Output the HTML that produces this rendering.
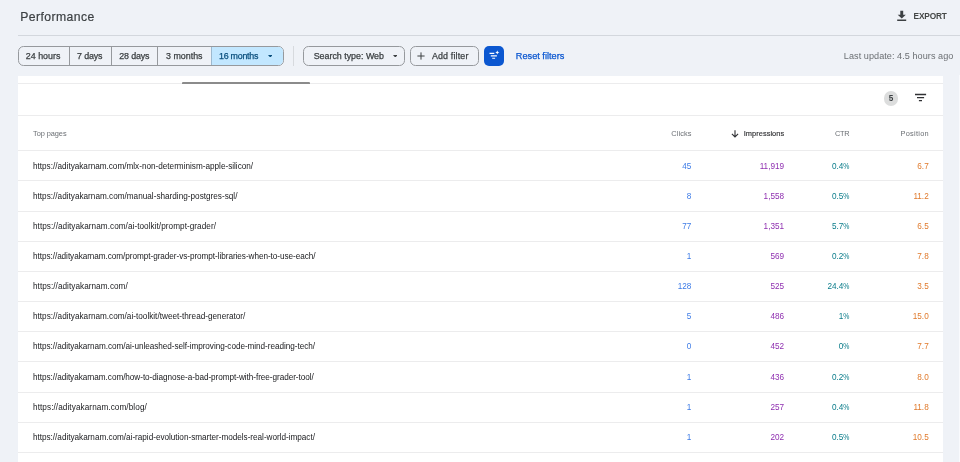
<!DOCTYPE html>
<html lang="en">
<head>
<meta charset="utf-8">
<title>Performance</title>
<style>
*{box-sizing:border-box;margin:0;padding:0}
html,body{width:960px;height:462px;overflow:hidden;background:#eff2f7;font-family:"Liberation Sans",Arial,sans-serif;color:#1f1f1f}
.a{position:absolute;white-space:nowrap}
.seg{position:absolute;top:45.8px;height:20px;border:1px solid #96999d;font-size:8.9px;line-height:18px;color:#3c4043;white-space:nowrap;-webkit-text-stroke:0.25px currentColor}
.seg span{position:absolute;top:0}
.ln{position:absolute;left:17.8px;width:925.7px;height:1px;background:#ececed}
.t{position:absolute;white-space:nowrap;font-size:8.2px;line-height:10px}
.url{color:#202124}
.r{text-align:right}
.c1{color:#3d7be6}
.c2{color:#8f2fb0}
.c3{color:#0a7c8a}
.c4{color:#e07a2c}
.h{color:#6b6f74;font-size:7.4px}
</style>
</head>
<body><div id="root" style="position:absolute;left:0;top:0;width:960px;height:462px;will-change:transform">
<div class="a" id="title" style="left:20.3px;top:7.85px;font-size:12.2px;line-height:18px;color:#3c4043;-webkit-text-stroke:0.2px #3c4043;letter-spacing:0.420px">Performance</div>
<svg class="a" style="left:896px;top:9.5px" width="12" height="13" viewBox="0 0 12 13"><path d="M1.2 9.6h9v1.5h-9zM4.3 0.8h2.9v3.9h2.6L5.75 8.6 1.7 4.7h2.6z" fill="#3c4043"/></svg>
<div class="a" id="export" style="left:913.6px;top:10.9px;font-size:8.3px;line-height:10px;font-weight:bold;color:#444746;letter-spacing:-0.160px">EXPORT</div>
<div class="a" style="left:17.8px;right:0;top:34.8px;height:1px;background:#d3d7dd"></div>
<div class="a" style="left:17.8px;top:45.8px;width:266.3px;height:20px;border:1px solid #96999d;border-radius:5.5px;overflow:hidden"><div class="a" style="left:192.2px;top:-1px;width:80px;height:20px;background:#c2e7ff;border:1px solid #86a9c4;border-right:0;border-left-color:#9db9cf"></div></div>
<div class="a" style="left:69.0px;top:46.5px;width:1px;height:18.6px;background:#96999d"></div>
<div class="a" style="left:110.8px;top:46.5px;width:1px;height:18.6px;background:#96999d"></div>
<div class="a" style="left:157.0px;top:46.5px;width:1px;height:18.6px;background:#96999d"></div>
<div class="seg" style="border:0;left:25.8px;top:46.8px;height:18px;"><span id="s1" style="left:0;letter-spacing:0.000px">24 hours</span></div>
<div class="seg" style="border:0;left:77.0px;top:46.8px;height:18px;"><span id="s2" style="left:0;letter-spacing:-0.120px">7 days</span></div>
<div class="seg" style="border:0;left:119.3px;top:46.8px;height:18px;"><span id="s3" style="left:0;letter-spacing:-0.150px">28 days</span></div>
<div class="seg" style="border:0;left:166.0px;top:46.8px;height:18px;"><span id="s4" style="left:0;letter-spacing:0.000px">3 months</span></div>
<div class="seg" style="border:0;left:219.0px;top:46.8px;height:18px;color:#0a4f7d"><span id="s5" style="left:0;letter-spacing:-0.250px">16 months</span></div>
<svg class="a" style="left:267.9px;top:54.7px" width="4.6" height="2.8" viewBox="0 0 5 3"><path d="M0 0h5L2.5 2.8z" fill="#0a4f7d"/></svg>
<div class="a" style="left:293.3px;top:46px;width:1px;height:19.5px;background:#d7dade"></div>
<div class="seg" style="left:303.3px;width:101.8px;border-radius:5.5px"><span id="s6" style="left:9.4px;letter-spacing:-0.007px">Search type: Web</span></div>
<svg class="a" style="left:392.9px;top:54.7px" width="4.6" height="2.8" viewBox="0 0 5 3"><path d="M0 0h5L2.5 2.8z" fill="#3c4043"/></svg>
<div class="seg" style="left:410.3px;width:69.1px;border-radius:5.5px"><span id="s7" style="left:20.6px;letter-spacing:0.167px">Add filter</span></div>
<svg class="a" style="left:416.8px;top:51.8px" width="8" height="8" viewBox="0 0 8 8"><path d="M4 0.4v7.2M0.4 4h7.2" stroke="#3c4043" stroke-width="1" fill="none"/></svg>
<div class="a" style="left:483.9px;top:45.8px;width:20.2px;height:19.9px;border-radius:5px;background:#0b57d0"></div>
<svg class="a" style="left:484px;top:46px" width="20" height="20" viewBox="0 0 20 20"><path d="M5.5 7.3h4.8M6.8 9.8h6.1M8.2 12.2h2.9" stroke="#fff" stroke-width="1.15" fill="none"/><path d="M13.3 4.2c.25 1.4.8 1.95 2.2 2.2-1.4.25-1.95.8-2.2 2.2-.25-1.4-.8-1.95-2.2-2.2 1.4-.25 1.95-.8 2.2-2.2z" fill="#fff"/></svg>
<div class="a" id="reset" style="left:515.8px;top:50.6px;font-size:9.2px;line-height:10px;color:#0b57d0;-webkit-text-stroke:0.25px #0b57d0;letter-spacing:0.000px">Reset filters</div>
<div class="a" id="last" style="left:843.8px;top:50.6px;font-size:9.1px;line-height:10px;color:#6b6f73;letter-spacing:0.056px">Last update: 4.5 hours ago</div>
<div class="a" style="left:17.8px;top:75.5px;width:925.7px;height:390px;background:#fff"></div>
<div class="a" style="left:958.5px;top:75.2px;width:3px;height:390px;background:#f9fafd"></div>
<div class="ln" style="top:82.9px"></div>
<div class="a" style="left:181.5px;top:81.95px;width:128.6px;height:1.9px;background:#8b8b8b;border-radius:1px 1px 0 0"></div>
<div class="a" style="left:883.6px;top:90.9px;width:14.8px;height:14.8px;border-radius:50%;background:#dcdddd"></div>
<div class="a" style="left:883.7px;top:93.7px;width:14.6px;text-align:center;font-size:8.2px;line-height:10px;font-weight:bold;color:#3c4043">5</div>
<svg class="a" style="left:914px;top:92px" width="14" height="12" viewBox="0 0 14 12"><path d="M1 2.5h11.1M3 5.6h7.1M4.9 8.7h3.1" stroke="#303134" stroke-width="1.3" fill="none"/></svg>
<div class="ln" style="top:115.1px"></div>
<div class="t h" id="h0" style="left:33px;top:129.35px;letter-spacing:-0.062px">Top pages</div>
<div class="t h r" id="h1" style="right:268.52px;top:129.35px;letter-spacing:0.080px">Clicks</div>
<div class="t h r" id="h2" style="right:175.85px;top:129.35px;letter-spacing:0.050px;color:#202124;color:#303134;-webkit-text-stroke:0.15px #303134">Impressions</div>
<svg class="a" style="left:730.65px;top:129.8px" width="8" height="8" viewBox="0 0 8 8"><path d="M4 0.2v6.4M0.9 3.8L4 6.9 7.1 3.8" stroke="#303134" stroke-width="1.1" fill="none"/></svg>
<div class="t h r" id="h3" style="right:110.80px;top:129.35px;letter-spacing:-0.300px">CTR</div>
<div class="t h r" id="h4" style="right:31.03px;top:129.35px;letter-spacing:0.271px">Position</div>
<div class="ln" style="top:150.30px"></div>
<div class="t url" id="u0" style="left:33px;top:161.60px;letter-spacing:-0.010px">https://adityakarnam.com/mlx-non-determinism-apple-silicon/</div>
<div class="t r c1" id="a0" style="right:268.60px;top:161.60px">45</div>
<div class="t r c2" id="b0" style="right:175.90px;top:161.60px">11,919</div>
<div class="t r c3" id="c0" style="right:110.50px;top:161.60px">0.4<span style="display:inline-block;transform:scaleX(.84);transform-origin:100% 50%;margin-left:-1.17px">%</span></div>
<div class="t r c4" id="d0" style="right:31.30px;top:161.60px">6.7</div>
<div class="ln" style="top:180.46px"></div>
<div class="t url" id="u1" style="left:33px;top:191.73px;letter-spacing:0.002px">https://adityakarnam.com/manual-sharding-postgres-sql/</div>
<div class="t r c1" id="a1" style="right:268.60px;top:191.73px">8</div>
<div class="t r c2" id="b1" style="right:175.90px;top:191.73px">1,558</div>
<div class="t r c3" id="c1" style="right:110.50px;top:191.73px">0.5<span style="display:inline-block;transform:scaleX(.84);transform-origin:100% 50%;margin-left:-1.17px">%</span></div>
<div class="t r c4" id="d1" style="right:31.30px;top:191.73px">11.2</div>
<div class="ln" style="top:210.62px"></div>
<div class="t url" id="u2" style="left:33px;top:221.86px;letter-spacing:0.047px">https://adityakarnam.com/ai-toolkit/prompt-grader/</div>
<div class="t r c1" id="a2" style="right:268.60px;top:221.86px">77</div>
<div class="t r c2" id="b2" style="right:175.90px;top:221.86px">1,351</div>
<div class="t r c3" id="c2" style="right:110.50px;top:221.86px">5.7<span style="display:inline-block;transform:scaleX(.84);transform-origin:100% 50%;margin-left:-1.17px">%</span></div>
<div class="t r c4" id="d2" style="right:31.30px;top:221.86px">6.5</div>
<div class="ln" style="top:240.78px"></div>
<div class="t url" id="u3" style="left:33px;top:251.99px;letter-spacing:-0.056px">https://adityakarnam.com/prompt-grader-vs-prompt-libraries-when-to-use-each/</div>
<div class="t r c1" id="a3" style="right:268.60px;top:251.99px">1</div>
<div class="t r c2" id="b3" style="right:175.90px;top:251.99px">569</div>
<div class="t r c3" id="c3" style="right:110.50px;top:251.99px">0.2<span style="display:inline-block;transform:scaleX(.84);transform-origin:100% 50%;margin-left:-1.17px">%</span></div>
<div class="t r c4" id="d3" style="right:31.30px;top:251.99px">7.8</div>
<div class="ln" style="top:270.94px"></div>
<div class="t url" id="u4" style="left:33px;top:282.12px;letter-spacing:0.042px">https://adityakarnam.com/</div>
<div class="t r c1" id="a4" style="right:268.60px;top:282.12px">128</div>
<div class="t r c2" id="b4" style="right:175.90px;top:282.12px">525</div>
<div class="t r c3" id="c4" style="right:110.50px;top:282.12px">24.4<span style="display:inline-block;transform:scaleX(.84);transform-origin:100% 50%;margin-left:-1.17px">%</span></div>
<div class="t r c4" id="d4" style="right:31.30px;top:282.12px">3.5</div>
<div class="ln" style="top:301.10px"></div>
<div class="t url" id="u5" style="left:33px;top:312.25px;letter-spacing:0.005px">https://adityakarnam.com/ai-toolkit/tweet-thread-generator/</div>
<div class="t r c1" id="a5" style="right:268.60px;top:312.25px">5</div>
<div class="t r c2" id="b5" style="right:175.90px;top:312.25px">486</div>
<div class="t r c3" id="c5" style="right:110.50px;top:312.25px">1<span style="display:inline-block;transform:scaleX(.84);transform-origin:100% 50%;margin-left:-1.17px">%</span></div>
<div class="t r c4" id="d5" style="right:31.30px;top:312.25px">15.0</div>
<div class="ln" style="top:331.26px"></div>
<div class="t url" id="u6" style="left:33px;top:342.38px;letter-spacing:-0.051px">https://adityakarnam.com/ai-unleashed-self-improving-code-mind-reading-tech/</div>
<div class="t r c1" id="a6" style="right:268.60px;top:342.38px">0</div>
<div class="t r c2" id="b6" style="right:175.90px;top:342.38px">452</div>
<div class="t r c3" id="c6" style="right:110.50px;top:342.38px">0<span style="display:inline-block;transform:scaleX(.84);transform-origin:100% 50%;margin-left:-1.17px">%</span></div>
<div class="t r c4" id="d6" style="right:31.30px;top:342.38px">7.7</div>
<div class="ln" style="top:361.42px"></div>
<div class="t url" id="u7" style="left:33px;top:372.51px;letter-spacing:-0.055px">https://adityakarnam.com/how-to-diagnose-a-bad-prompt-with-free-grader-tool/</div>
<div class="t r c1" id="a7" style="right:268.60px;top:372.51px">1</div>
<div class="t r c2" id="b7" style="right:175.90px;top:372.51px">436</div>
<div class="t r c3" id="c7" style="right:110.50px;top:372.51px">0.2<span style="display:inline-block;transform:scaleX(.84);transform-origin:100% 50%;margin-left:-1.17px">%</span></div>
<div class="t r c4" id="d7" style="right:31.30px;top:372.51px">8.0</div>
<div class="ln" style="top:391.58px"></div>
<div class="t url" id="u8" style="left:33px;top:402.64px;letter-spacing:0.079px">https://adityakarnam.com/blog/</div>
<div class="t r c1" id="a8" style="right:268.60px;top:402.64px">1</div>
<div class="t r c2" id="b8" style="right:175.90px;top:402.64px">257</div>
<div class="t r c3" id="c8" style="right:110.50px;top:402.64px">0.4<span style="display:inline-block;transform:scaleX(.84);transform-origin:100% 50%;margin-left:-1.17px">%</span></div>
<div class="t r c4" id="d8" style="right:31.30px;top:402.64px">11.8</div>
<div class="ln" style="top:421.74px"></div>
<div class="t url" id="u9" style="left:33px;top:432.77px;letter-spacing:-0.026px">https://adityakarnam.com/ai-rapid-evolution-smarter-models-real-world-impact/</div>
<div class="t r c1" id="a9" style="right:268.60px;top:432.77px">1</div>
<div class="t r c2" id="b9" style="right:175.90px;top:432.77px">202</div>
<div class="t r c3" id="c9" style="right:110.50px;top:432.77px">0.5<span style="display:inline-block;transform:scaleX(.84);transform-origin:100% 50%;margin-left:-1.17px">%</span></div>
<div class="t r c4" id="d9" style="right:31.30px;top:432.77px">10.5</div>
<div class="ln" style="top:451.90px"></div>
</div></body>
</html>
